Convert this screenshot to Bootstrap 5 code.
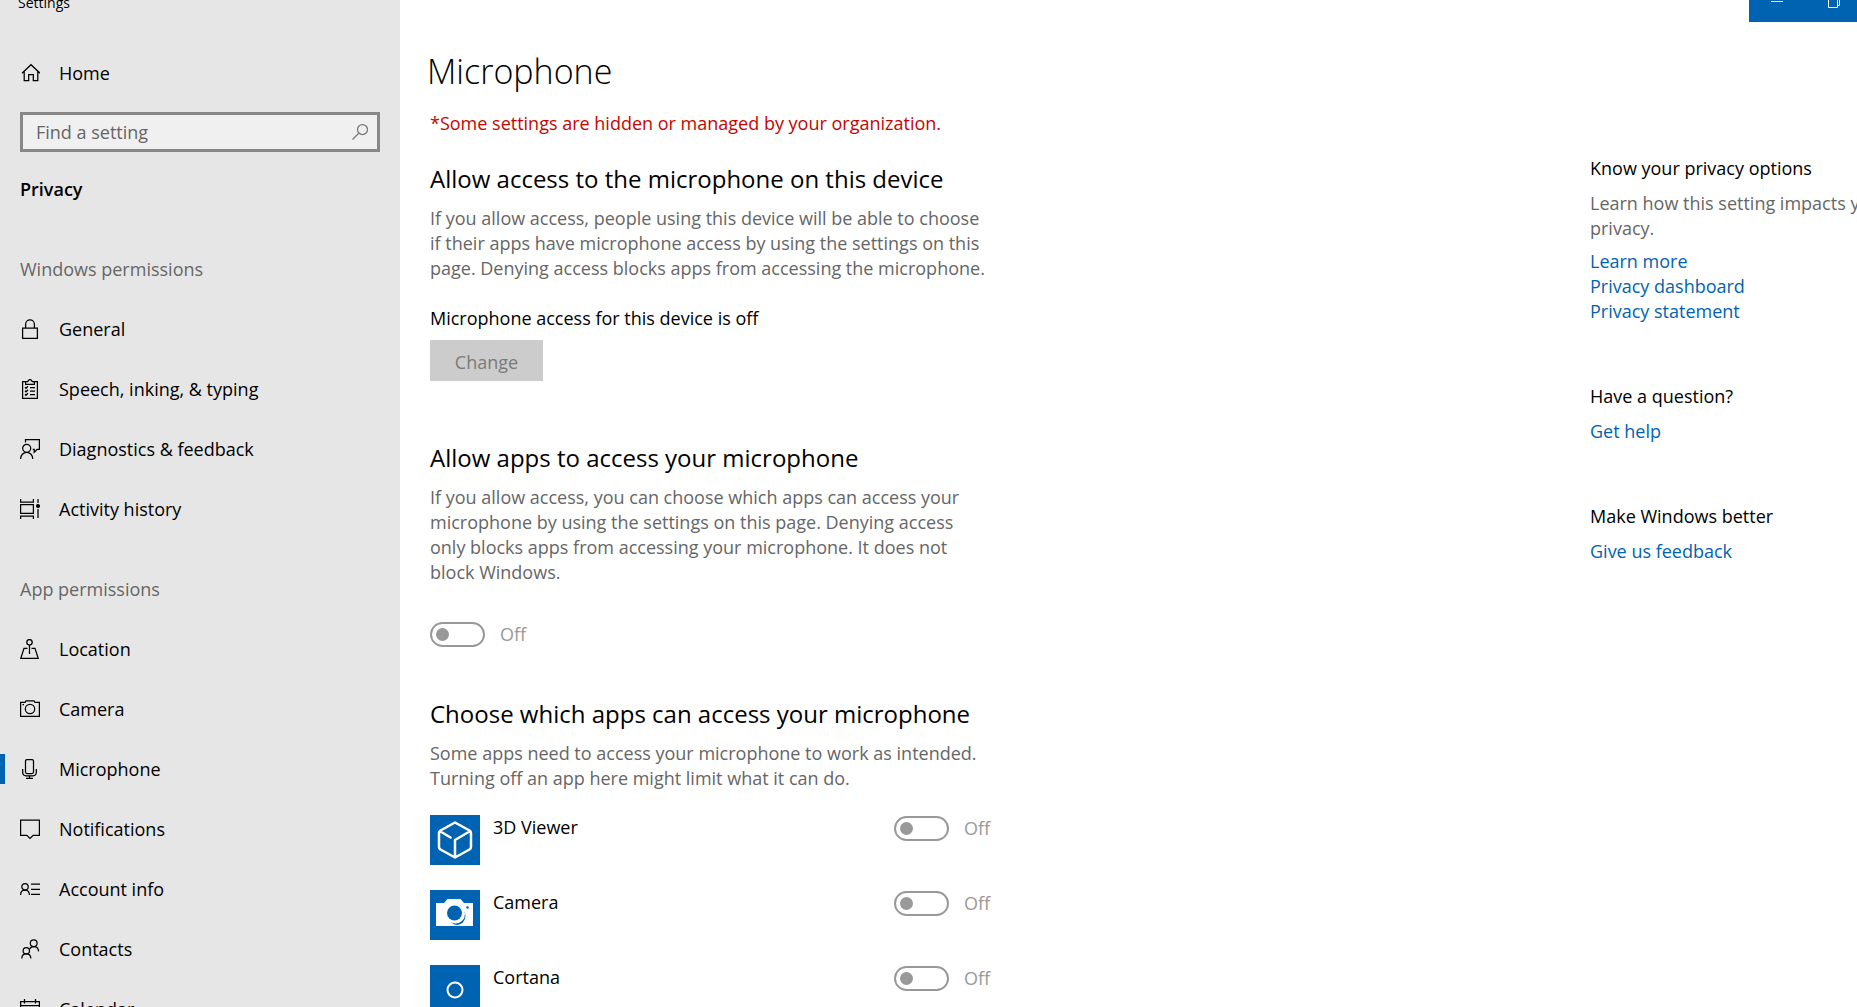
<!DOCTYPE html>
<html lang="en">
<head>
<meta charset="utf-8">
<meta name="viewport" content="width=device-width, initial-scale=1">
<title>Settings</title>
<link href="https://cdn.jsdelivr.net/npm/bootstrap@5.3.0/dist/css/bootstrap.min.css" rel="stylesheet">
<style>
  :root { --accent: #0063b1; --muted: #666; --pane: #e6e6e6; }
  body { font: 400 18px/25px "Open Sans", "Noto Sans", sans-serif; color: #000; background: #fff; }
  h1 { font-size: 34px; line-height: 46px; font-weight: 300; margin: 0 0 17px -3px; }
  h2 { font-size: 24px; line-height: 34px; font-weight: 400; margin: 0 0 10px; }
  h3 { font-size: 18px; line-height: 25px; font-weight: 400; margin: 0 0 10px; }
  p { margin: 0; }
  a { color: var(--accent); text-decoration: none; }
  .text-soft { color: var(--muted); }
  .org-note { color: #c50500; }
  .side-pane { width: 400px; background: var(--pane); }
  .app-title { font-size: 14px; line-height: 20px; height: 43px; padding-left: 18px; }
  .app-title span { margin-top: -7px; }
  .side-pane .nav-link { height: 60px; padding: 0 20px; gap: 19px; color: #000; position: relative; }
  .side-pane .nav-link.active::before { content: ""; position: absolute; left: 0; top: 15px; width: 5px; height: 30px; background: var(--accent); }
  .side-pane svg { width: 20px; height: 20px; flex: none; fill: none; stroke: #000; stroke-width: 1.25; }
  .find-box { height: 40px; margin: 9px 20px 0; border: 3px solid #888; background: #f0f0f0; padding: 0 8px 0 13px; }
  .find-box input { border: 0; outline: 0; background: none; min-width: 0; padding: 0; height: 30px; }
  .find-box input::placeholder { color: var(--muted); opacity: 1; }
  .side-pane .find-box svg { width: 18px; height: 18px; stroke: #777; }
  .side-head { padding: 0 20px; }
  .side-name { font-weight: 600; margin-top: 25px; }
  .group-one { margin: 55px 0 17px; }
  .group-two { margin: 38px 0 17px; }
  .main-pane { min-width: 0; padding: 48px 0 0 30px; }
  .page-col { width: 560px; }
  .win-buttons { background: var(--accent); width: 108px; height: 22px; }
  .win-buttons button { border: 0; background: none; padding: 0; width: 58px; height: 22px; }
  .win-buttons svg { display: block; width: 58px; height: 22px; fill: none; stroke: #fff; stroke-width: 1; }
  .btn-flat, .btn-flat:disabled { width: 113px; height: 41px; padding: 3px 0 0; border: 0; border-radius: 0; background: #ccc; color: #7a7a7a; opacity: 1; font-size: 18px; line-height: 25px; }
  .toggle-wrap { gap: 15px; color: #999; }
  .toggle-main { margin-top: 37px; }
  .form-check-input.pill-toggle { width: 55px; height: 25px; margin: 0; border: 2px solid #999; border-radius: 13px; background: #fff; opacity: 1; position: relative; flex: none; }
  .pill-toggle::before { content: ""; position: absolute; left: 4px; top: 4px; width: 13px; height: 13px; border-radius: 50%; background: #999; }
  .form-check-input.pill-toggle:disabled ~ label { opacity: 1; }
  .app-list { gap: 25px; margin-top: 24px; }
  .app-list .toggle-wrap { margin-left: auto; padding-top: 1px; }
  .app-tile { width: 50px; height: 50px; background: var(--accent); margin-right: 13px; flex: none; }
  .mt-first { margin-top: 26px; }
  .mt-section { margin-top: 60px; }
  .mt-apps { margin-top: 50px; }
  .access-state { margin: 25px 0 9px; }
  .help-pane { width: 267px; padding-top: 108px; white-space: nowrap; }
</style>
</head>
<body>
<div class="d-flex vh-100 overflow-hidden position-relative">
  <nav class="side-pane flex-shrink-0 overflow-hidden" aria-label="Settings">
    <div class="app-title d-flex align-items-start"><span>Settings</span></div>
    <a class="nav-link d-flex align-items-center" href="#home">
      <svg viewBox="0 0 20 20"><path d="M2 10.200 11 1.700l9 8.500M4.200 8.500v9h4.500v-6h4.600v6h4.500v-9"/></svg>Home</a>
    <div class="find-box d-flex align-items-center">
      <label class="visually-hidden" for="find">Find a setting</label>
      <input id="find" class="flex-grow-1" type="text" placeholder="Find a setting">
      <svg viewBox="0 0 18 18"><circle cx="11.500" cy="6.500" r="5"/><path d="M8 10 1.500 16.500"/></svg>
    </div>
    <p class="side-head side-name">Privacy</p>
    <p class="side-head group-one text-soft">Windows permissions</p>
    <div class="nav flex-column flex-nowrap">
      <a class="nav-link d-flex align-items-center" href="#general">
        <svg viewBox="0 0 20 20"><path d="M2.600 9.100h14.800v10.200H2.600zM5.600 9V5.200a4.400 4.400 0 0 1 8.800 0V9"/></svg>General</a>
      <a class="nav-link d-flex align-items-center" href="#speech">
        <svg viewBox="0 0 20 20"><path d="M6 2.600H2.600v16.800h14.800V2.600H14M5.600 5.400V2.600h2.200c.3-1.300 1-2 2.200-2s1.900.7 2.200 2h2.200v2.800zM10 8.500h5M10 12h5M10 15.500h5M5 8.300l1 1 2-2M5 11.800l1 1 2-2M5 15.300l1 1 2-2"/></svg>Speech, inking, &amp; typing</a>
      <a class="nav-link d-flex align-items-center" href="#diagnostics">
        <svg viewBox="0 0 20 20"><circle cx="6.700" cy="9.300" r="4"/><path d="M.6 20c0-4 2.700-6.600 6.100-6.600s6.100 2.600 6.100 6.600M5.500 3.500V.6h13.900v9.700h-2.200l-3 3v-3h-1.500"/></svg>Diagnostics &amp; feedback</a>
      <a class="nav-link d-flex align-items-center" href="#activity">
        <svg viewBox="0 0 20 20"><path d="M.6 5.600h12.800v8.800H.6zM.6 0v3h12.800V0M.6 20v-3h12.800v3M18 0v4M18 10v9"/><circle cx="18" cy="7" r="1.400" fill="#000"/></svg>Activity history</a>
    </div>
    <p class="side-head group-two text-soft">App permissions</p>
    <div class="nav flex-column flex-nowrap">
      <a class="nav-link d-flex align-items-center" href="#location">
        <svg viewBox="0 0 20 20"><circle cx="9.500" cy="3.300" r="2.700"/><path d="M9.500 6v9M7.500 9.300H4L.8 19.300h17.400L15 9.300h-3.500"/></svg>Location</a>
      <a class="nav-link d-flex align-items-center" href="#camera">
        <svg viewBox="0 0 20 20"><path d="M.6 3.300H5l1-1.500h8l1 1.500h4.400v14H.6z"/><circle cx="10" cy="10" r="4.700"/><path d="M2.500 5.500h1.500"/></svg>Camera</a>
      <a class="nav-link d-flex align-items-center active" href="#microphone" aria-current="page">
        <svg viewBox="0 0 20 20"><rect x="5.500" y=".6" width="8" height="14" rx="1.500"/><path d="M2.700 10v3.300c0 2.200 1.200 3.500 3.300 3.500h7c2.100 0 3.300-1.300 3.300-3.500V10M9.500 17v2.300M6 19.400h7"/></svg>Microphone</a>
      <a class="nav-link d-flex align-items-center" href="#notifications">
        <svg viewBox="0 0 20 20"><path d="M.6 1.100h18.800v15.300h-6.200L10 19.400l-3.200-3H.6z"/></svg>Notifications</a>
      <a class="nav-link d-flex align-items-center" href="#account">
        <svg viewBox="0 0 20 20"><circle cx="5" cy="7.800" r="3.200"/><path d="M.6 16c0-3 1.900-5 4.400-5s4.400 2 4.400 5M11 5.200h9M11 10.300h9M11 15.400h9"/></svg>Account info</a>
      <a class="nav-link d-flex align-items-center" href="#contacts">
        <svg viewBox="0 0 20 20"><circle cx="6.300" cy="11.700" r="3.200"/><path d="M1.800 19.500c0-3 1.900-4.600 4.500-4.600s4.500 1.600 4.500 4.600"/><circle cx="13.700" cy="4.300" r="3.400"/><path d="M9.800 10c.6-1.500 2-2.300 3.900-2.300 2.800 0 4.700 1.800 4.900 4.700"/></svg>Contacts</a>
      <a class="nav-link d-flex align-items-center" href="#calendar">
        <svg viewBox="0 0 20 20"><path d="M.6 2.600h18.800v16.800H.6zM.6 6.600h18.800M4.500 0v4.500M15.500 0v4.500"/></svg>Calendar</a>
    </div>
  </nav>

  <main class="main-pane d-flex flex-grow-1">
    <div class="page-col flex-shrink-0">
      <h1>Microphone</h1>
      <p class="org-note">*Some settings are hidden or managed by your organization.</p>

      <section class="mt-first">
        <h2>Allow access to the microphone on this device</h2>
        <p class="text-soft">If you allow access, people using this device will be able to choose<br>if their apps have microphone access by using the settings on this<br>page. Denying access blocks apps from accessing the microphone.</p>
        <p class="access-state">Microphone access for this device is off</p>
        <button class="btn btn-flat d-block" type="button" disabled>Change</button>
      </section>

      <section class="mt-section">
        <h2>Allow apps to access your microphone</h2>
        <p class="text-soft">If you allow access, you can choose which apps can access your<br>microphone by using the settings on this page. Denying access<br>only blocks apps from accessing your microphone. It does not<br>block Windows.</p>
        <div class="toggle-wrap toggle-main d-flex align-items-center">
          <input class="form-check-input pill-toggle" type="checkbox" role="switch" id="allApps" disabled>
          <label for="allApps">Off</label>
        </div>
      </section>

      <section class="mt-apps">
        <h2>Choose which apps can access your microphone</h2>
        <p class="text-soft">Some apps need to access your microphone to work as intended.<br>Turning off an app here might limit what it can do.</p>
        <div class="app-list d-flex flex-column">
          <div class="d-flex align-items-start">
            <svg class="app-tile" viewBox="0 0 50 50" fill="none" stroke="#fff" stroke-width="2.500" stroke-linejoin="round" stroke-linecap="round"><path d="M25 7.500 39.500 15.500q1.500 1 1.500 2.500v14q0 1.500-1.500 2.500L25 42.500 10.500 34.500Q9 33.500 9 32V18q0-1.500 1.500-2.500zM10.500 16.500 20.500 22.500M39.500 16.500 25 25v17"/></svg>
            <span>3D Viewer</span>
            <div class="toggle-wrap d-flex align-items-center">
              <input class="form-check-input pill-toggle" type="checkbox" role="switch" id="viewer" aria-label="3D Viewer" disabled>
              <label for="viewer">Off</label>
            </div>
          </div>
          <div class="d-flex align-items-start">
            <svg class="app-tile" viewBox="0 0 50 50"><path fill="#fff" d="M6 13h8l3.500-4h13l3.500 4h9v23H6z"/><ellipse cx="27" cy="26" rx="8.500" ry="9" fill="#0063b1"/><circle cx="25.500" cy="24" r="9.500" fill="#fff"/><circle cx="24.500" cy="23" r="7.500" fill="#0063b1"/><circle cx="37.500" cy="17.500" r="1.200" fill="#0063b1"/></svg>
            <span>Camera</span>
            <div class="toggle-wrap d-flex align-items-center">
              <input class="form-check-input pill-toggle" type="checkbox" role="switch" id="cam" aria-label="Camera" disabled>
              <label for="cam">Off</label>
            </div>
          </div>
          <div class="d-flex align-items-start">
            <svg class="app-tile" viewBox="0 0 50 50"><circle cx="25" cy="25" r="7.500" fill="none" stroke="#fff" stroke-width="2"/></svg>
            <span>Cortana</span>
            <div class="toggle-wrap d-flex align-items-center">
              <input class="form-check-input pill-toggle" type="checkbox" role="switch" id="cortana" aria-label="Cortana" disabled>
              <label for="cortana">Off</label>
            </div>
          </div>
        </div>
      </section>
    </div>

    <aside class="help-pane ms-auto flex-shrink-0">
      <h3>Know your privacy options</h3>
      <p class="text-soft mb-2">Learn how this setting impacts your<br>privacy.</p>
      <a class="d-block" href="#learn">Learn more</a>
      <a class="d-block" href="#dashboard">Privacy dashboard</a>
      <a class="d-block" href="#statement">Privacy statement</a>
      <h3 class="mt-section">Have a question?</h3>
      <a class="d-block" href="#help">Get help</a>
      <h3 class="mt-section">Make Windows better</h3>
      <a class="d-block" href="#feedback">Give us feedback</a>
    </aside>
  </main>

  <div class="win-buttons position-absolute top-0 end-0 d-flex overflow-hidden">
    <button type="button" aria-label="Minimize"><svg viewBox="0 0 58 22"><path d="M22 1.500h12"/></svg></button>
    <button type="button" aria-label="Restore"><svg viewBox="0 0 58 22"><path d="M21.500-3v10.500h9V-3M31 5.500h1.500V-3"/></svg></button>
  </div>
</div>
<script src="https://cdn.jsdelivr.net/npm/bootstrap@5.3.0/dist/js/bootstrap.bundle.min.js"></script>
</body>
</html>
